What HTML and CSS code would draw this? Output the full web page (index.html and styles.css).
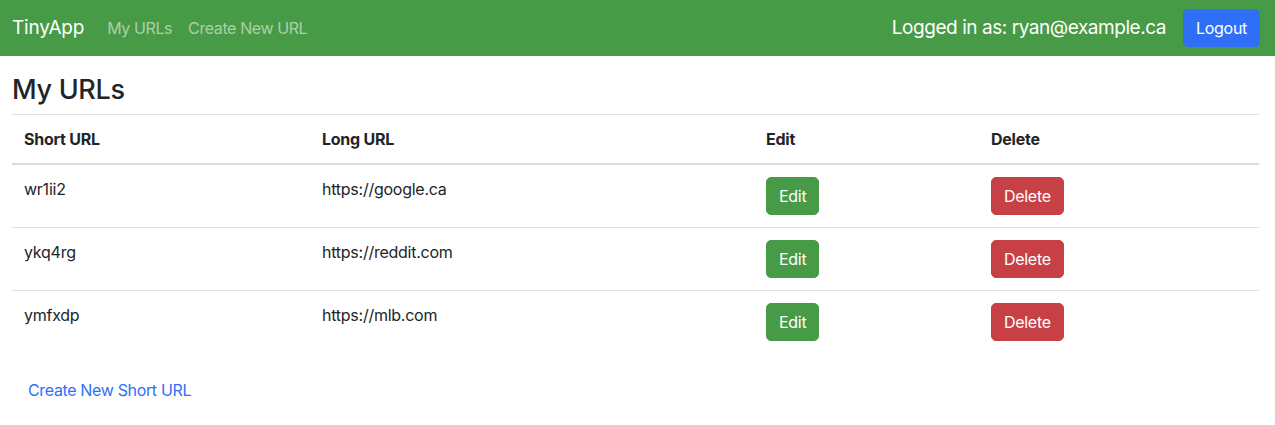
FILE: index.html
```html
<!DOCTYPE html>
<html lang="en">
<head>
<meta charset="utf-8">
<title>TinyApp</title>
<link rel="stylesheet" href="styles.css">
</head>
<body>
<nav class="navbar">
  <div class="nav-left">
    <a class="brand" href="#">TinyApp</a>
    <a class="nav-link" href="#">My URLs</a>
    <a class="nav-link" href="#">Create New URL</a>
  </div>
  <div class="nav-right">
    <span class="user">Logged in as: ryan@example.ca</span>
    <button class="btn btn-primary">Logout</button>
  </div>
</nav>
<main class="container">
  <h3 class="title">My URLs</h3>
  <table class="table">
    <thead>
      <tr>
        <th class="c1">Short URL</th>
        <th class="c2">Long URL</th>
        <th class="c3">Edit</th>
        <th class="c4">Delete</th>
      </tr>
    </thead>
    <tbody>
      <tr>
        <td>wr1ii2</td>
        <td>https://google.ca</td>
        <td><button class="btn btn-success">Edit</button></td>
        <td><button class="btn btn-danger">Delete</button></td>
      </tr>
      <tr>
        <td>ykq4rg</td>
        <td>https://reddit.com</td>
        <td><button class="btn btn-success">Edit</button></td>
        <td><button class="btn btn-danger">Delete</button></td>
      </tr>
      <tr>
        <td>ymfxdp</td>
        <td>https://mlb.com</td>
        <td><button class="btn btn-success">Edit</button></td>
        <td><button class="btn btn-danger">Delete</button></td>
      </tr>
    </tbody>
  </table>
  <div class="create">
    <a class="create-link" href="#">Create New Short URL</a>
  </div>
</main>
</body>
</html>
```
FILE: styles.css
```css
* { box-sizing: border-box; }
html, body { margin: 0; padding: 0; }
body {
  font-family: Inter, "Noto Sans", "Liberation Sans", sans-serif;
  font-size: 16px;
  line-height: 1.5;
  color: #212529;
  background: #fff;
}
a { text-decoration: none; }

.navbar {
  height: 56px;
  background: #479a46;
  display: flex;
  align-items: center;
  justify-content: space-between;
  padding: 0 15px 0 12px;
}
.nav-left { display: flex; align-items: center; }
.brand {
  color: #fff;
  font-size: 19px;
  margin-right: 23px;
  letter-spacing: -0.2px;
}
.nav-link {
  color: rgba(255,255,255,0.55);
  font-size: 16px;
  margin-right: 16px;
  letter-spacing: -0.4px;
}
.nav-right { display: flex; align-items: center; }
.user {
  color: #fff;
  font-size: 19px;
  margin-right: 17px;
  letter-spacing: -0.45px;
}

.btn {
  font-family: inherit;
  font-size: 16px;
  line-height: 24px;
  padding: 6px 12px;
  border: 1px solid transparent;
  border-radius: 5px;
  color: #fff;
  cursor: pointer;
  letter-spacing: -0.3px;
}
.btn-primary { background: #2f6ff6; border-color: #2f6ff6; }
.btn-success { background: #479a46; border-color: #479a46; }
.btn-danger { background: #c74045; border-color: #c74045; }

.container { padding: 0 16px 0 12px; }
.title {
  font-size: 27px;
  font-weight: 500;
  line-height: 1.2;
  margin: 18px 0 8px;
  letter-spacing: -0.3px;
}

.table {
  width: 100%;
  border-collapse: collapse;
  border-top: 1px solid #dee2e6;
}
.table th, .table td {
  text-align: left;
  vertical-align: top;
  padding: 12px;
  letter-spacing: -0.25px;
}
.table th {
  font-weight: 700;
  border-bottom: 2px solid #d8dbde;
}
.table tbody tr + tr td { border-top: 1px solid #dee2e6; }
.c1 { width: 298px; }
.c2 { width: 444px; }
.c3 { width: 225px; }

.create { padding: 25px 16px; }
.create-link { color: #2f6ff6; letter-spacing: -0.35px; }
```
